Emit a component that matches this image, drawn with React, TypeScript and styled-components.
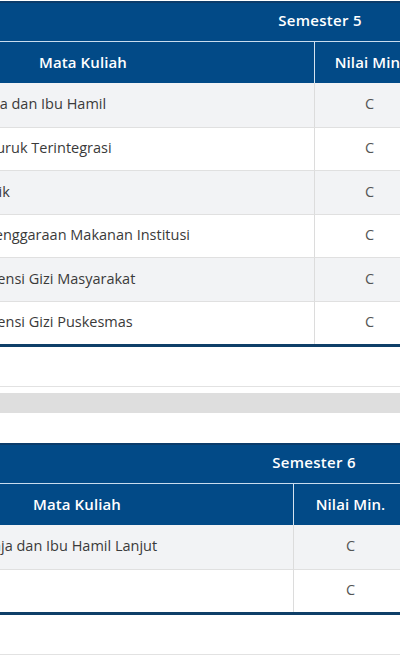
import React from "react";
import styled, { createGlobalStyle } from "styled-components";

const GlobalStyle = createGlobalStyle`
  html, body {
    margin: 0;
    padding: 0;
    background: #ffffff;
  }
  body {
    font-family: "Open Sans", "Noto Sans", Arial, sans-serif;
    color: #3a3a3a;
  }
`;

const Viewport = styled.div`
  width: 400px;
  overflow: hidden;
`;

const Section = styled.section<{ $top: number }>`
  padding-top: ${(p) => p.$top}px;
  padding-bottom: 39px;
  border-bottom: 1px solid #e2e2e2;
`;

const Separator = styled.div`
  margin-top: 6px;
  height: 20px;
  background: #dedede;
`;

const Table = styled.div<{ $offset: number; $cols: string }>`
  margin-left: ${(p) => -p.$offset}px;
  display: grid;
  grid-template-columns: ${(p) => p.$cols};
  width: max-content;
  border-top: 2px solid #0b3c6b;
  border-bottom: 3px solid #0f3f68;
`;

const TitleCell = styled.div`
  grid-column: 1 / -1;
  height: 39px;
  padding-bottom: 4px;
  box-sizing: border-box;
  background: #024a87;
  border-bottom: 1px solid #c9dcee;
  color: #ffffff;
  font-weight: 600;
  font-size: 15px;
  letter-spacing: 0.3px;
  display: flex;
  align-items: center;
  justify-content: center;
`;

const HeadCell = styled.div<{ $divider?: boolean }>`
  height: 41px;
  background: #024a87;
  color: #ffffff;
  font-weight: 600;
  font-size: 15px;
  letter-spacing: 0.1px;
  display: flex;
  align-items: center;
  justify-content: center;
  box-sizing: border-box;
  padding-bottom: 2px;
  border-left: ${(p) => (p.$divider ? "1px solid #d4e2ef" : "none")};
`;

const BodyCell = styled.div<{ $alt: boolean; $first: boolean; $divider?: boolean; $center?: boolean; $pad?: number }>`
  height: 43.5px;
  box-sizing: border-box;
  background: ${(p) => (p.$alt ? "#f2f3f5" : "#ffffff")};
  border-top: ${(p) => (p.$first ? "none" : "1px solid #e0e0e0")};
  border-left: ${(p) => (p.$divider ? "1px solid #dcdcdc" : "none")};
  display: flex;
  align-items: center;
  justify-content: ${(p) => (p.$center ? "center" : "flex-start")};
  padding-left: ${(p) => p.$pad ?? 0}px;
  padding-bottom: 2px;
  font-size: 14.5px;
  color: ${(p) => (p.$center ? "#555555" : "#3a3a3a")};
  white-space: nowrap;
`;

type Course = { name: string; grade: string; sks: string };

type Semester = {
  title: string;
  top: number;
  offset: number;
  cols: string;
  pad: number;
  courses: Course[];
};

const semesters: Semester[] = [
  {
    title: "Semester 5",
    top: 1,
    offset: 148,
    cols: "462px 110px 364px",
    pad: 77,
    courses: [
      { name: "Gizi Remaja dan Ibu Hamil", grade: "C", sks: "3" },
      { name: "KEP Gizi Buruk Terintegrasi", grade: "C", sks: "3" },
      { name: "Medis Klinik", grade: "C", sks: "3" },
      { name: "K3 Penyelenggaraan Makanan Institusi", grade: "C", sks: "3" },
      { name: "PKL Intervensi Gizi Masyarakat", grade: "C", sks: "3" },
      { name: "PKL Intervensi Gizi Puskesmas", grade: "C", sks: "3" },
    ],
  },
  {
    title: "Semester 6",
    top: 30,
    offset: 139,
    cols: "432px 114px 360px",
    pad: 73,
    courses: [
      { name: "Gizi Remaja dan Ibu Hamil Lanjut", grade: "C", sks: "3" },
      { name: "Skripsi", grade: "C", sks: "4" },
    ],
  },
];

function SemesterTable({ s }: { s: Semester }) {
  return (
    <Table $offset={s.offset} $cols={s.cols}>
      <TitleCell>{s.title}</TitleCell>
      <HeadCell>Mata Kuliah</HeadCell>
      <HeadCell $divider>Nilai Min.</HeadCell>
      <HeadCell $divider>SKS</HeadCell>
      {s.courses.map((c, i) => {
        const alt = i % 2 === 0;
        const first = i === 0;
        return (
          <React.Fragment key={c.name}>
            <BodyCell $alt={alt} $first={first} $pad={s.pad}>
              {c.name}
            </BodyCell>
            <BodyCell $alt={alt} $first={first} $divider $center>
              {c.grade}
            </BodyCell>
            <BodyCell $alt={alt} $first={first} $divider $center>
              {c.sks}
            </BodyCell>
          </React.Fragment>
        );
      })}
    </Table>
  );
}

export default function App() {
  return (
    <>
      <GlobalStyle />
      <Viewport>
        <Section $top={semesters[0].top}>
          <SemesterTable s={semesters[0]} />
        </Section>
        <Separator />
        <Section $top={semesters[1].top}>
          <SemesterTable s={semesters[1]} />
        </Section>
      </Viewport>
    </>
  );
}
